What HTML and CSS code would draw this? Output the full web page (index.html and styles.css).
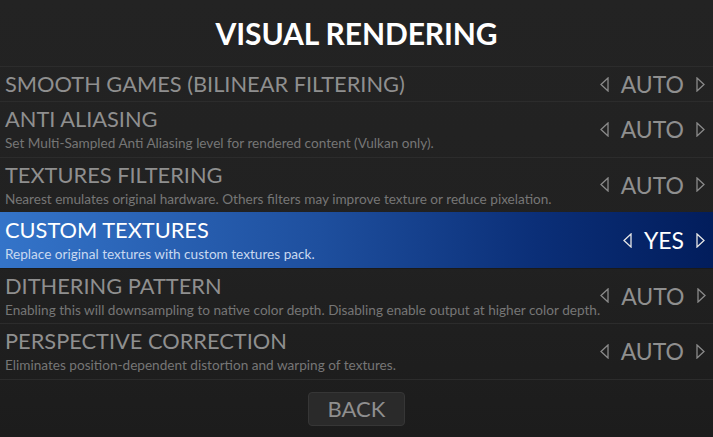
FILE: index.html
```html
<!DOCTYPE html>
<html>
<head>
<meta charset="utf-8">
<link rel="stylesheet" href="styles.css">
</head>
<body>
<div class="screen">
  <header class="header"><h1 class="title">VISUAL RENDERING</h1></header>
  <div class="list">
    <div class="row row-short">
      <div class="text"><div class="label">SMOOTH GAMES (BILINEAR FILTERING)</div></div>
      <div class="value"><svg class="arrow" viewBox="0 0 9 15"><path d="M8 1 L1 7.5 L8 14 Z"/></svg><span>AUTO</span><svg class="arrow" viewBox="0 0 9 15"><path d="M1 1 L8 7.5 L1 14 Z"/></svg></div>
    </div>
    <div class="row">
      <div class="text"><div class="label">ANTI ALIASING</div><div class="desc">Set Multi-Sampled Anti Aliasing level for rendered content (Vulkan only).</div></div>
      <div class="value"><svg class="arrow" viewBox="0 0 9 15"><path d="M8 1 L1 7.5 L8 14 Z"/></svg><span>AUTO</span><svg class="arrow" viewBox="0 0 9 15"><path d="M1 1 L8 7.5 L1 14 Z"/></svg></div>
    </div>
    <div class="row">
      <div class="text"><div class="label">TEXTURES FILTERING</div><div class="desc">Nearest emulates original hardware. Others filters may improve texture or reduce pixelation.</div></div>
      <div class="value"><svg class="arrow" viewBox="0 0 9 15"><path d="M8 1 L1 7.5 L8 14 Z"/></svg><span>AUTO</span><svg class="arrow" viewBox="0 0 9 15"><path d="M1 1 L8 7.5 L1 14 Z"/></svg></div>
    </div>
    <div class="row selected">
      <div class="text"><div class="label">CUSTOM TEXTURES</div><div class="desc">Replace original textures with custom textures pack.</div></div>
      <div class="value"><svg class="arrow" viewBox="0 0 9 15"><path d="M8 1 L1 7.5 L8 14 Z"/></svg><span>YES</span><svg class="arrow" viewBox="0 0 9 15"><path d="M1 1 L8 7.5 L1 14 Z"/></svg></div>
    </div>
    <div class="row">
      <div class="text"><div class="label">DITHERING PATTERN</div><div class="desc">Enabling this will downsampling to native color depth. Disabling enable output at higher color depth.</div></div>
      <div class="value"><svg class="arrow" viewBox="0 0 9 15"><path d="M8 1 L1 7.5 L8 14 Z"/></svg><span>AUTO</span><svg class="arrow" viewBox="0 0 9 15"><path d="M1 1 L8 7.5 L1 14 Z"/></svg></div>
    </div>
    <div class="row">
      <div class="text"><div class="label">PERSPECTIVE CORRECTION</div><div class="desc">Eliminates position-dependent distortion and warping of textures.</div></div>
      <div class="value"><svg class="arrow" viewBox="0 0 9 15"><path d="M8 1 L1 7.5 L8 14 Z"/></svg><span>AUTO</span><svg class="arrow" viewBox="0 0 9 15"><path d="M1 1 L8 7.5 L1 14 Z"/></svg></div>
    </div>
  </div>
  <div class="footer"><button class="back">BACK</button></div>
</div>
</body>
</html>
```

FILE: styles.css
```css
html, body {
  margin: 0;
  padding: 0;
  background: #1d1d1d;
}
.screen {
  width: 713px;
  height: 437px;
  background: linear-gradient(to bottom, #232323 0%, #212121 60%, #1c1c1c 100%);
  font-family: Lato, "Liberation Sans", sans-serif;
  overflow: hidden;
}
.header {
  height: 66px;
  display: flex;
  align-items: center;
  justify-content: center;
}
.title {
  margin: 0;
  color: #ffffff;
  font-size: 30px;
  font-weight: 700;
  letter-spacing: -0.1px;
}
.list {
  border-bottom: 1px solid #2c2c2c;
}
.row {
  box-sizing: border-box;
  height: 55.5px;
  border-top: 1px solid #2c2c2c;
  display: flex;
  align-items: center;
  justify-content: space-between;
  padding: 0 8px 0 5px;
}
.row-short {
  height: 35px;
}
.text {
  display: flex;
  flex-direction: column;
}
.label {
  font-size: 21.8px;
  line-height: 24px;
  color: #8f8f8f;
  white-space: nowrap;
}
.desc {
  font-size: 13.6px;
  line-height: 16px;
  margin-top: 4px;
  color: #767676;
  white-space: nowrap;
}
.value {
  display: flex;
  align-items: center;
  gap: 12px;
  font-size: 23px;
  color: #8f8f8f;
}
.arrow {
  width: 9px;
  height: 15px;
}
.arrow path {
  fill: none;
  stroke: #8a8a8a;
  stroke-width: 1.3;
  stroke-linejoin: miter;
}
.selected {
  border-top-color: transparent;
  background: linear-gradient(to right, #3474c9 0%, #1e4f9e 45%, #0b2f78 75%, #021d5c 100%);
}
.selected + .row {
  border-top-color: #1a1a1a;
}
.selected .label,
.selected .value {
  color: #ffffff;
}
.selected .desc {
  color: #c9d9f0;
}
.selected .arrow path {
  stroke: #e6e6e6;
}
.footer {
  display: flex;
  justify-content: center;
  padding-top: 12px;
}
.back {
  width: 97px;
  height: 34px;
  box-sizing: border-box;
  background: #2a2a2a;
  border: 1px solid #363636;
  border-radius: 4px;
  color: #8f8f8f;
  font-family: Lato, "Liberation Sans", sans-serif;
  font-size: 22px;
  padding: 0;
  line-height: 32px;
}
```
